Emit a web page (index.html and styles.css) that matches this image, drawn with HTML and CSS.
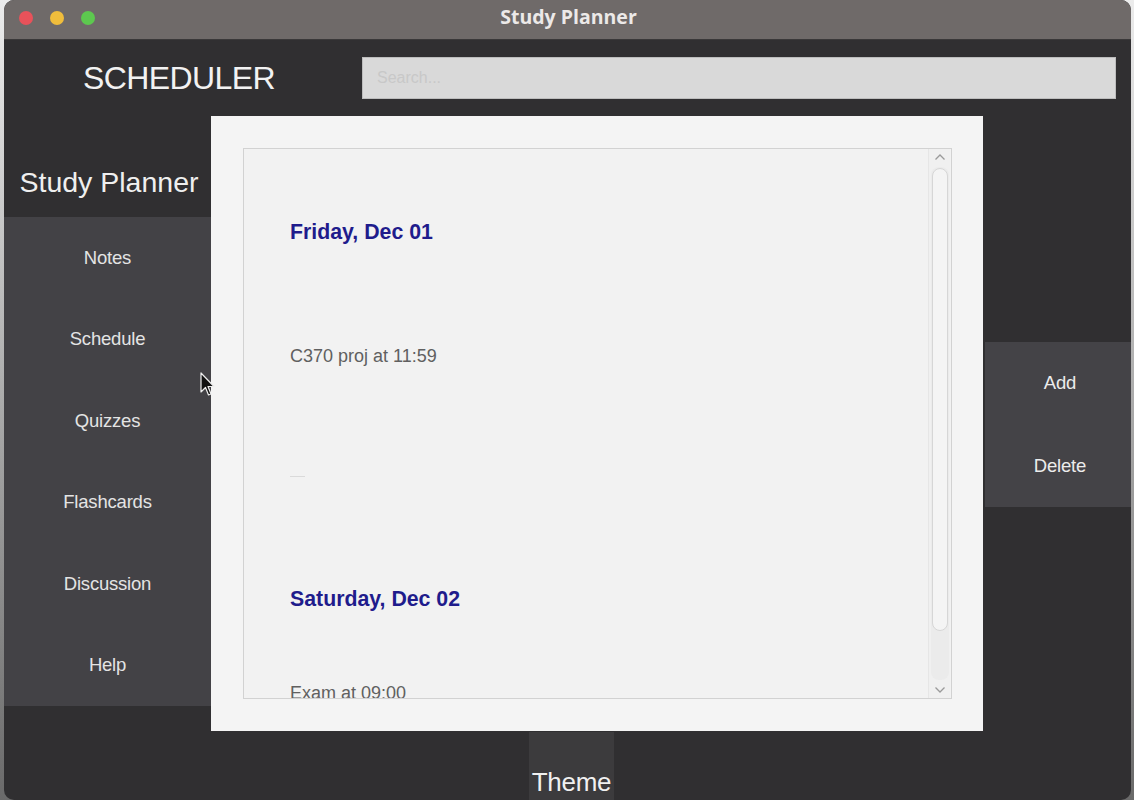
FILE: index.html
```html
<!DOCTYPE html>
<html lang="en">
<head>
<meta charset="utf-8">
<title>Study Planner</title>
<link rel="stylesheet" href="styles.css">
</head>
<body>
<div class="window">
  <div class="titlebar">
    <div class="lights">
      <span class="light red"></span>
      <span class="light yellow"></span>
      <span class="light green"></span>
    </div>
    <div class="title">Study Planner</div>
    <div class="spacer"></div>
  </div>
  <div class="app">
    <div class="header">
      <div class="brand">SCHEDULER</div>
      <div class="search">Search...</div>
    </div>
    <div class="main">
      <div class="sidebar">
        <div class="side-title">Study Planner</div>
        <nav class="nav">
          <div class="nav-item">Notes</div>
          <div class="nav-item">Schedule</div>
          <div class="nav-item">Quizzes</div>
          <div class="nav-item">Flashcards</div>
          <div class="nav-item">Discussion</div>
          <div class="nav-item">Help</div>
        </nav>
      </div>
      <div class="modal">
        <div class="scrollbox">
          <div class="list">
            <div class="day first">Friday, Dec 01</div>
            <div class="event ev1">C370 proj at 11:59</div>
            <div class="dash"></div>
            <div class="day second">Saturday, Dec 02</div>
            <div class="event ev2">Exam at 09:00</div>
          </div>
          <div class="scrollbar">
            <svg class="arrow" width="12" height="8" viewBox="0 0 12 8"><path d="M1.5 6.5 L6 2 L10.5 6.5" fill="none" stroke="#9a9a9a" stroke-width="1.3"/></svg>
            <div class="track"><div class="thumb"></div></div>
            <svg class="arrow" width="12" height="8" viewBox="0 0 12 8"><path d="M1.5 1.5 L6 6 L10.5 1.5" fill="none" stroke="#9a9a9a" stroke-width="1.3"/></svg>
          </div>
        </div>
      </div>
      <div class="right">
        <div class="actions">
          <div class="action">Add</div>
          <div class="action">Delete</div>
        </div>
      </div>
    </div>
    <div class="footer">
      <div class="theme">Theme</div>
    </div>
  </div>
  <svg class="cursor" width="16" height="26" viewBox="0 0 16 26"><path d="M1 1 L1 20 L5.5 15.5 L8.5 23 L11 22 L8 14.5 L14 14.5 Z" fill="#111" stroke="#eee" stroke-width="1.2" stroke-linejoin="round"/></svg>
</div>
</body>
</html>
```
FILE: styles.css
```css
* { box-sizing: border-box; }
html, body { margin: 0; padding: 0; }
body {
  width: 1134px;
  height: 800px;
  overflow: hidden;
  background: linear-gradient(#ececec, #6a6a6a);
  font-family: "Liberation Sans", Arial, sans-serif;
}
.window {
  position: relative;
  margin-left: 4px;
  width: 1127px;
  height: 800px;
  border-radius: 10px;
  overflow: hidden;
  background: #302f31;
  display: flex;
  flex-direction: column;
}
.titlebar {
  height: 40px;
  flex: none;
  background: #6f6a69;
  display: grid;
  grid-template-columns: 1fr auto 1fr;
  align-items: center;
  border-bottom: 1px solid #3a3839;
  padding-bottom: 4px;
}
.lights {
  display: flex;
  gap: 17px;
  padding-left: 15px;
}
.light {
  width: 14px;
  height: 14px;
  border-radius: 50%;
  display: block;
}
.red { background: #e8525a; }
.yellow { background: #f0bd3c; }
.green { background: #5dc84f; }
.title {
  color: #ece9e8;
  font-weight: bold;
  font-size: 19.5px;
  font-family: "Open Sans", "Liberation Sans", sans-serif;
  margin-top: -3px;
  margin-left: 2px;
}
.app {
  flex: 1;
  display: flex;
  flex-direction: column;
}
.header {
  height: 76px;
  flex: none;
  display: flex;
  align-items: center;
}
.brand {
  width: 348px;
  margin-right: 10px;
  text-align: center;
  color: #f2f2f2;
  font-size: 32px;
  letter-spacing: -0.6px;
  padding-left: 2px;
}
.search {
  width: 754px;
  height: 42px;
  background: #d9d9d9;
  border: 1px solid #bdbdbd;
  color: #c8c8c8;
  font-size: 16px;
  line-height: 40px;
  padding-left: 14px;
}
.main {
  height: 615px;
  flex: none;
  display: flex;
}
.sidebar {
  width: 207px;
  flex: none;
  display: flex;
  flex-direction: column;
}
.side-title {
  height: 101px;
  padding-top: 49px;
  padding-left: 3px;
  line-height: 34px;
  text-align: center;
  color: #efefef;
  font-size: 28.5px;
}
.nav {
  height: 489px;
  background: #434246;
  display: flex;
  flex-direction: column;
}
.nav-item {
  flex: 1;
  display: flex;
  align-items: center;
  justify-content: center;
  color: #e4e4e4;
  font-size: 18.5px;
  letter-spacing: -0.2px;
}
.modal {
  width: 772px;
  flex: none;
  background: #f4f4f4;
  padding: 32px 31px 32px 32px;
}
.scrollbox {
  height: 100%;
  border: 1px solid #d2d2d2;
  background: #f2f2f2;
  display: flex;
  overflow: hidden;
}
.list {
  flex: 1;
  padding-left: 46px;
  overflow: hidden;
}
.day {
  color: #1f1c8c;
  font-weight: bold;
  font-size: 21.3px;
  line-height: 24px;
}
.first { margin-top: 71px; }
.second { margin-top: 110px; }
.event {
  color: #606060;
  font-size: 18px;
  line-height: 20px;
}
.ev1 { margin-top: 102px; }
.ev2 { margin-top: 72px; }
.dash {
  width: 15px;
  height: 1px;
  background: #dadada;
  margin-top: 110px;
}
.scrollbar {
  width: 22px;
  flex: none;
  margin-right: 1px;
  display: flex;
  flex-direction: column;
  align-items: center;
  padding: 4px 0 4px;
  background: #f0f0f0;
  border-left: 1px solid #e6e6e6;
}
.arrow { flex: none; display: block; }
.track {
  flex: 1;
  width: 18px;
  margin: 6px 0;
  border-radius: 8px;
  background: #ebebeb;
  padding-top: 1px;
}
.thumb {
  width: 16px;
  height: 463px;
  margin: 0 auto;
  border-radius: 8px;
  background: #f4f4f4;
  border: 1px solid #d6d6d6;
}
.right {
  flex: 1;
  padding-top: 226px;
  padding-left: 2px;
}
.actions {
  height: 165px;
  background: #444347;
  display: flex;
  flex-direction: column;
  margin-right: -4px;
}
.action {
  flex: 1;
  display: flex;
  align-items: center;
  justify-content: center;
  color: #ececec;
  font-size: 18.5px;
  letter-spacing: -0.2px;
}
.footer {
  flex: 1;
  display: flex;
  justify-content: center;
}
.theme {
  width: 85px;
  margin-left: 8px;
  margin-top: 1px;
  background: #3c3b3d;
  text-align: center;
  color: #f0f0f0;
  font-size: 26px;
  letter-spacing: -0.3px;
  padding-top: 35px;
  line-height: 30px;
}
.cursor {
  position: absolute;
  left: 196px;
  top: 372px;
}
```
